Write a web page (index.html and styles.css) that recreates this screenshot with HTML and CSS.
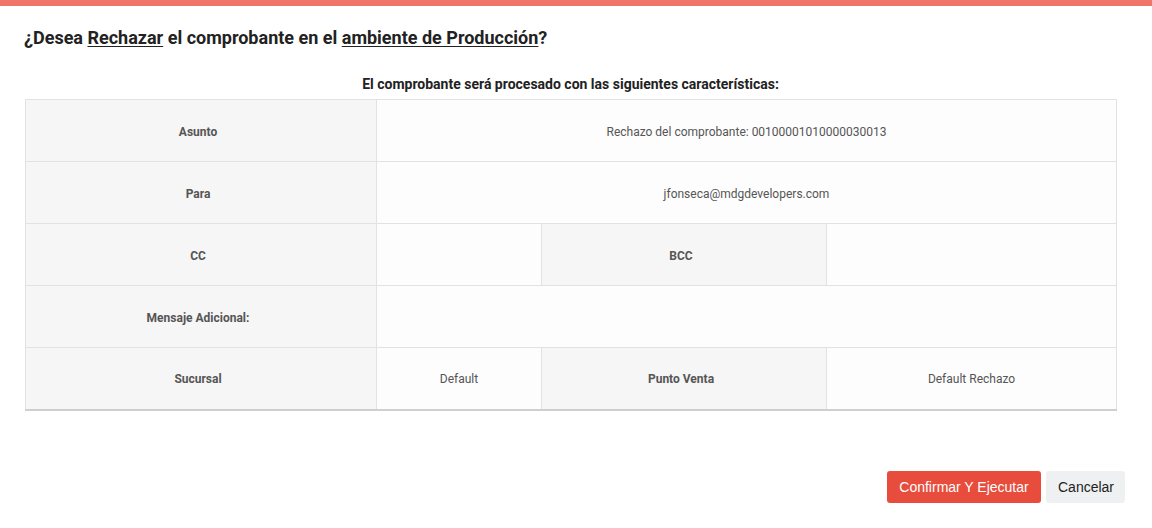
FILE: index.html
```html
<!DOCTYPE html>
<html lang="es">
<head>
<meta charset="utf-8">
<title>Rechazar comprobante</title>
<link rel="stylesheet" href="styles.css">
</head>
<body>
<div class="modal">
  <div class="topbar"></div>
  <h1 class="title">¿Desea <u>Rechazar</u> el comprobante en el <u>ambiente de Producción</u>?</h1>
  <div class="body">
    <p class="subtitle">El comprobante será procesado con las siguientes características:</p>
    <table class="info">
      <colgroup>
        <col class="c1"><col class="c2"><col class="c3"><col class="c4">
      </colgroup>
      <tr>
        <th>Asunto</th>
        <td colspan="3">Rechazo del comprobante: 00100001010000030013</td>
      </tr>
      <tr>
        <th>Para</th>
        <td colspan="3">jfonseca@mdgdevelopers.com</td>
      </tr>
      <tr>
        <th>CC</th>
        <td></td>
        <th>BCC</th>
        <td></td>
      </tr>
      <tr>
        <th>Mensaje Adicional:</th>
        <td colspan="3"></td>
      </tr>
      <tr>
        <th>Sucursal</th>
        <td>Default</td>
        <th>Punto Venta</th>
        <td>Default Rechazo</td>
      </tr>
    </table>
  </div>
  <div class="footer">
    <button class="btn btn-danger">Confirmar Y Ejecutar</button>
    <button class="btn btn-light">Cancelar</button>
  </div>
</div>
</body>
</html>
```
FILE: styles.css
```css
* { box-sizing: border-box; }
html, body { margin: 0; padding: 0; background: #fff; }
body { font-family: Roboto, "Liberation Sans", Arial, sans-serif; color: #333; width: 1152px; height: 528px; overflow: hidden; }
.modal { display: flex; flex-direction: column; height: 528px; }
.topbar { height: 6px; background: #f07468; }
.title { margin: 0; padding: 20px 24px 0; font-size: 18px; line-height: 24px; font-weight: 700; color: #222; }
.title u { text-decoration-thickness: 1px; text-underline-offset: 2px; }
.body { padding: 0 36px 0 25px; }
.subtitle { margin: 25px 0 0; text-align: center; font-size: 14px; line-height: 19px; font-weight: 700; color: #222; padding-bottom: 5px; }
.info { width: 1091px; border-collapse: collapse; table-layout: fixed; border: 1px solid #cfcfcf; border-bottom: 2px solid #cfcfcf; }
.c1 { width: 351px; }
.c2 { width: 165px; }
.c3 { width: 285px; }
.c4 { width: 290px; }
.info th, .info td { height: 62px; border: 1px solid #e2e2e2; text-align: center; vertical-align: middle; font-size: 12px; padding: 2px 8px 0; color: #555; }
.info th { background: #f6f6f6; font-weight: 700; padding-right: 14px; }
.info td { background: #fdfdfd; font-weight: 400; }
.footer { margin-top: auto; display: flex; justify-content: flex-end; gap: 5px; padding: 0 27px 25px 0; }
.btn { font-family: "Liberation Sans", Arial, sans-serif; font-size: 14px; height: 32px; border: none; border-radius: 3px; padding: 0 12px; cursor: pointer; }
.btn-danger { background: #e74c3c; color: #fff; width: 154px; }
.btn-light { background: #eef0f2; color: #222; width: 79px; }
```
